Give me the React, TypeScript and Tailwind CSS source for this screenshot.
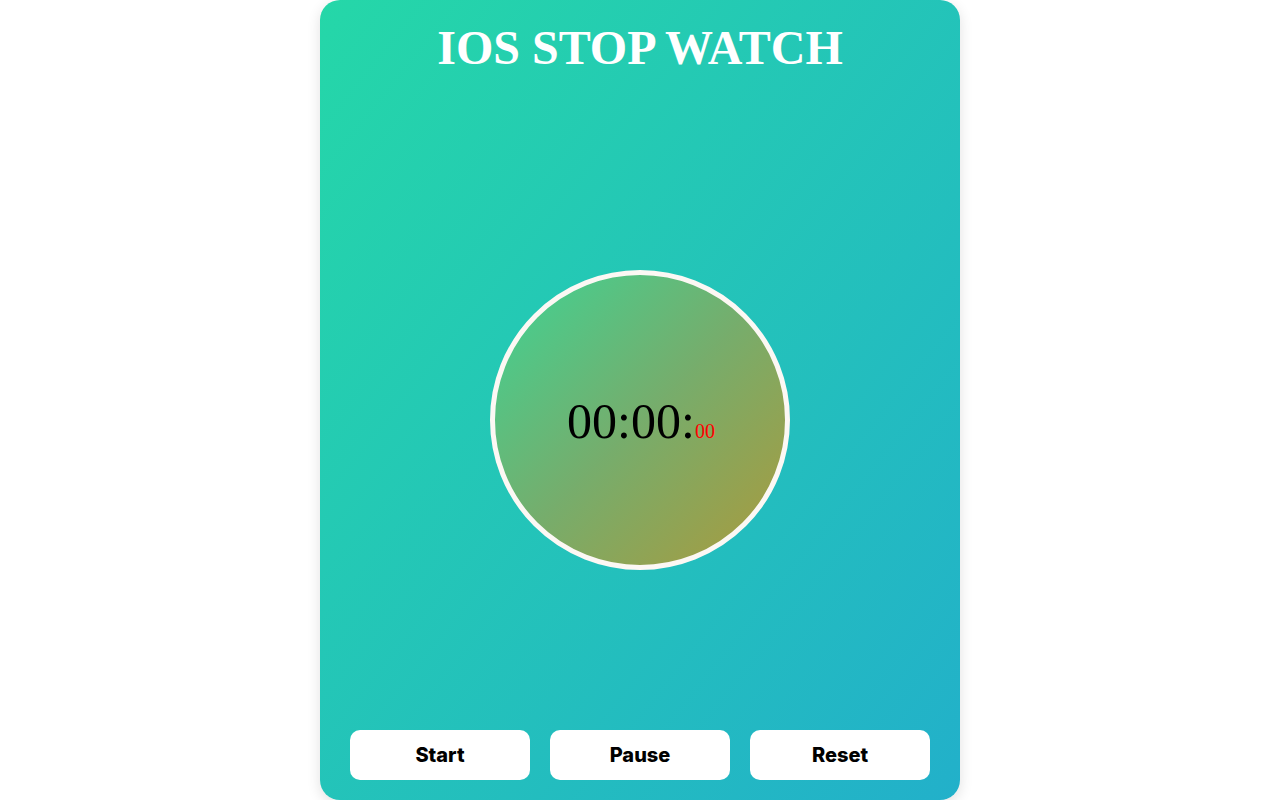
import React, { useEffect, useRef, useState } from 'react';

const pad = (n: number) => String(n).padStart(2, '0');

export default function App() {
  const [ms, setMs] = useState(0);
  const [running, setRunning] = useState(false);
  const timer = useRef<number | null>(null);

  useEffect(() => {
    if (!running) return;
    timer.current = window.setInterval(() => setMs((v) => v + 10), 10);
    return () => {
      if (timer.current) window.clearInterval(timer.current);
    };
  }, [running]);

  const minutes = Math.floor(ms / 60000);
  const seconds = Math.floor((ms % 60000) / 1000);
  const centis = Math.floor((ms % 1000) / 10);

  return (
    <div className="min-h-screen bg-white flex justify-center">
      <div className="w-[640px] h-[800px] rounded-[20px] bg-[linear-gradient(to_bottom_right,#25d7a8_0%,#22b0ca_100%)] shadow-[0_4px_14px_rgba(0,0,0,0.12)] flex flex-col items-center">
        <h1 className="mt-[20px] text-[48px] leading-[56px] font-bold text-white font-['Liberation_Serif',serif]">
          IOS STOP WATCH
        </h1>

        {/* dial */}
        <div className="flex-1 flex items-center justify-center pt-[34px]">
          <div className="w-[300px] h-[300px] rounded-full border-[5px] border-[#fcf8f4] bg-[linear-gradient(135deg,#3fd394_0%,#76ad6c_50%,#ab9a3c_100%)] flex items-center justify-center">
            <div className="flex items-baseline font-['Liberation_Serif',serif] text-black pl-[2px] mt-[1px]">
              <span className="text-[50px] leading-none">
                {pad(minutes)}:{pad(seconds)}:
              </span>
              <span className="text-[20px] leading-none text-[#ff0000]">{pad(centis)}</span>
            </div>
          </div>
        </div>

        <div className="w-full px-[30px] pb-[20px] grid grid-cols-3 gap-[20px] font-['Inter',sans-serif]">
          <button
            onClick={() => setRunning(true)}
            className="h-[50px] rounded-[10px] bg-white text-black text-[20px] font-extrabold"
          >
            Start
          </button>
          <button
            onClick={() => setRunning(false)}
            className="h-[50px] rounded-[10px] bg-white text-black text-[20px] font-extrabold"
          >
            Pause
          </button>
          <button
            onClick={() => {
              setRunning(false);
              setMs(0);
            }}
            className="h-[50px] rounded-[10px] bg-white text-black text-[20px] font-extrabold"
          >
            Reset
          </button>
        </div>
      </div>
    </div>
  );
}
